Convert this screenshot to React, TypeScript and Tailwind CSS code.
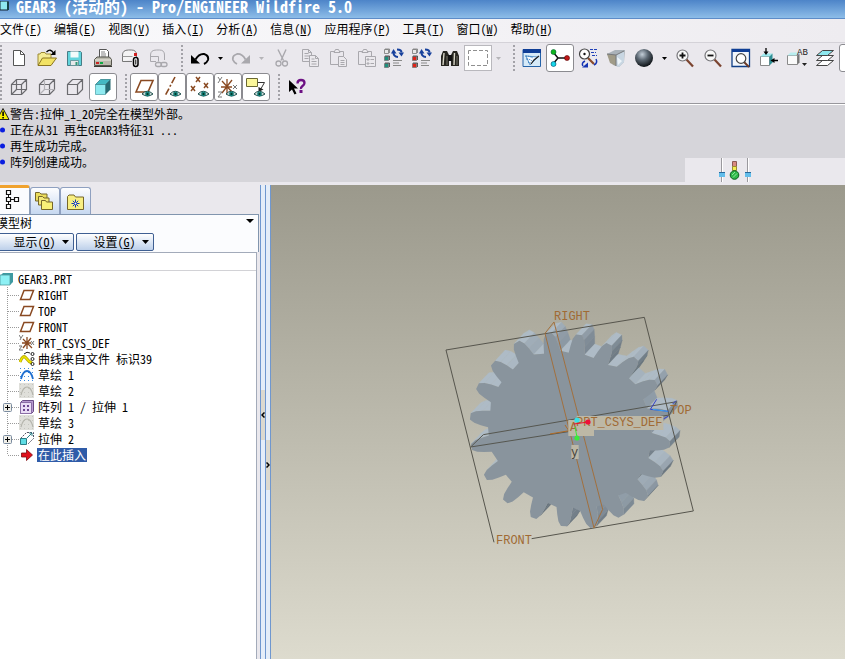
import type { ReactNode } from 'react';

const GREY = '#6b6b6f';
const PALE = '#a9a8ad';
const BROWN = '#8a4a22';

function Icon({ children, size = 20 }: { children: ReactNode; size?: number }) {
  return (
    <svg width={size} height={size} viewBox={`0 0 ${size} ${size}`} fill="none" className="shrink-0" aria-hidden="true">
      {children}
    </svg>
  );
}

function Tool({ label, pressed, disabled, children }: { label: string; pressed?: boolean; disabled?: boolean; children: ReactNode }) {
  return (
    <button
      type="button"
      aria-label={label}
      aria-pressed={pressed}
      disabled={disabled}
      className={
        pressed
          ? 'flex h-7 w-7 shrink-0 items-center justify-center rounded-[3px] border border-[#8b8b90] bg-white'
          : 'flex h-7 w-7 shrink-0 items-center justify-center'
      }
    >
      {children}
    </button>
  );
}

function Drop({ label, disabled }: { label: string; disabled?: boolean }) {
  return (
    <button type="button" aria-label={label} disabled={disabled} className="flex h-7 w-[13px] shrink-0 items-center justify-center">
      <svg width="5" height="3" viewBox="0 0 5 3" aria-hidden="true">
        <path d="M0 0h5L2.5 3z" fill={disabled ? '#b5b4b8' : '#000'} />
      </svg>
    </button>
  );
}

function Grip() {
  return (
    <div className="flex w-[13px] shrink-0 justify-center pl-1">
      <div className="h-[26px] border-l-2 border-dotted border-[#a3a2a8]" />
    </div>
  );
}

const wireCube = (hidden: string | null) => (
  <Icon>
    <path d="M2.5 7.5h10v10h-10zM2.5 7.5l5-5h10v10l-5 5M12.5 7.5l5-5" stroke={GREY} strokeWidth="1.2" />
    {hidden && <path d="M7.5 2.5v10h10M7.5 12.5l-5 5" stroke={hidden} strokeWidth="1.2" />}
  </Icon>
);

const eye = (
  <g>
    <path d="M9 18q5-5.500 11 0q-5.500 4-11 0" fill="#cfdad8" stroke="#1d4f4c" />
    <circle cx="14.500" cy="18" r="2.400" fill="#14807a" />
    <circle cx="14.500" cy="18" r="1" fill="#032" />
  </g>
);

const regen = (color: string) => (
  <Icon>
    {[1, 8, 15].map((y, i) => (
      <g key={y}>
        <path d={`M0.500 ${y + 0.5}h4v4h-4z`} fill={i === 0 ? '#e9e9e9' : color} stroke="#777" strokeWidth="0.800" />
        <path d={`M1 ${y}h4.500v4`} stroke={i === 0 ? '#777' : '#333'} strokeWidth="0.800" />
      </g>
    ))}
    <path d="M13 1.500q4.500 0 4.500 3" stroke="#17409c" strokeWidth="2" />
    <path d="M14.500 4.500h5.500l-2.500 4z" fill="#17409c" />
    <path d="M9.500 4.500q0 4 4.500 4.500" stroke="#17409c" strokeWidth="2" />
    <path d="M7 5.500L9.500 1l3 4.500z" fill="#17409c" />
    <path d="M9 12.500h9M9 15h6M9 17.500h8" stroke="#8a8a8a" />
  </Icon>
);

const magnifier = (sign: string) => (
  <Icon>
    <path d="M11 11l7 7.500" stroke="#7b4430" strokeWidth="2.200" />
    <circle cx="7.500" cy="7.500" r="5.500" fill="#f8f8f8" stroke="#77777b" strokeWidth="1.200" />
    <path d={sign} stroke="#111" strokeWidth="1.800" />
  </Icon>
);

const undoPath = 'M5.500 11.500Q9 5.500 14 6q5 1.500 4 6q-1 2.500-4 4';

function FileTools() {
  return (
    <>
      <Tool label="新建">
        <Icon>
          <path d="M4.500 2.500h7l4 4v11h-11z" fill="#fff" stroke="#555" />
          <path d="M11.500 2.500v4h4" stroke="#555" />
        </Icon>
      </Tool>
      <Tool label="打开">
        <Icon>
          <path d="M1 17V6h2l1-1.500h4L9 6h5v4" fill="#f5ec95" stroke="#9d8a35" />
          <path d="M1 17.500L5.500 10h14L14 17.500z" fill="#f2e263" stroke="#8a7420" />
          <path d="M9.500 4q4-4 7 1" stroke="#000" strokeWidth="1.300" />
          <path d="M18.500 2v5h-5z" fill="#000" />
        </Icon>
      </Tool>
      <Tool label="保存">
        <Icon>
          <path d="M2.500 3.500h13l1 1v13h-14z" fill="#62d4dc" stroke="#467c86" />
          <path d="M5.500 3.500h8v6h-8z" fill="#f2fbfb" />
          <path d="M5.500 12.500h8v5h-8z" fill="#e8e8ea" stroke="#5d8c92" strokeWidth="0.800" />
          <path d="M10.500 14h2v3h-2z" fill="#397" />
        </Icon>
      </Tool>
      <Tool label="打印">
        <Icon>
          <path d="M6.500 9.500v-8h7l2 2v6" fill="#fff" stroke="#555" />
          <path d="M8 4h4M8 6h5M8 8h5" stroke="#666" strokeWidth="0.800" />
          <path d="M1.500 11.500L4 9h12.500l2 2.500v6h-17z" fill="#b9b8ac" stroke="#55544c" />
          <path d="M2 12h16" stroke="#eeede4" />
          <path d="M3 14h3v2H3z" fill="#c22" />
          <path d="M7 14h3v2H7z" fill="#1a4" />
          <path d="M1 18.500h18" stroke="#3b3b36" />
        </Icon>
      </Tool>
      <Tool label="发送邮件">
        <Icon>
          <path d="M1.500 13.500V7q0-5 6-5h3q5 0 5 5v3M1.500 13.500H11" fill="#f4f4f4" stroke="#777" />
          <path d="M1.500 8.500h10" stroke="#999" />
          <path d="M13 5h3v3h-3z" fill="#d02020" />
          <rect x="12.500" y="9.500" width="4.500" height="9" rx="2.200" fill="#fff" stroke="#000" strokeWidth="1.500" />
          <path d="M14.800 11.500v5" stroke="#000" />
        </Icon>
      </Tool>
      <Tool label="发送链接" disabled>
        <Icon>
          <path d="M1.500 13.500V7q0-5 6-5h3q5 0 5 5v5M1.500 13.500H7M1.500 8.500h8v5" stroke={PALE} />
          <rect x="6.500" y="14.500" width="6" height="4" rx="2" stroke={PALE} strokeWidth="1.300" />
          <rect x="12" y="14.500" width="6" height="4" rx="2" stroke={PALE} strokeWidth="1.300" />
        </Icon>
      </Tool>
    </>
  );
}

function EditTools() {
  return (
    <>
      <Tool label="撤消">
        <Icon>
          <path d={undoPath} stroke="#000" strokeWidth="2" />
          <path d="M1 7v8.500h9z" fill="#000" />
        </Icon>
      </Tool>
      <Drop label="撤消列表" />
      <Tool label="重做" disabled>
        <Icon>
          <g transform="translate(20 0) scale(-1 1)">
            <path d={undoPath} stroke={PALE} strokeWidth="1.800" />
            <path d="M1 7v8.500h9z" fill={PALE} />
          </g>
        </Icon>
      </Tool>
      <Drop label="重做列表" disabled />
      <Tool label="剪切" disabled>
        <Icon>
          <path d="M6 1.500l5.500 11M14 1.500l-5 11" stroke={PALE} strokeWidth="1.400" />
          <circle cx="6.500" cy="15.500" r="2.500" stroke={PALE} strokeWidth="1.300" />
          <circle cx="13" cy="15.500" r="2.500" stroke={PALE} strokeWidth="1.300" />
        </Icon>
      </Tool>
      <Tool label="复制" disabled>
        <Icon>
          <path d="M2.500 1.500h6l3 3v9h-9zM8.500 1.500v3h3M4.500 5.500h4M4.500 8h5M4.500 10.500h4" stroke={PALE} />
          <path d="M9.500 7.500h6l3 3v8h-9z" fill="#ebe9ed" stroke={PALE} />
          <path d="M15.500 7.500v3h3M11.500 11h3M11.500 13.500h5M11.500 16h5" stroke={PALE} />
        </Icon>
      </Tool>
      <Tool label="粘贴" disabled>
        <Icon>
          <path d="M2.500 3.500h13v13h-13z" stroke={PALE} />
          <path d="M6 4.500L7.500 1.500h3L12 4.500z" fill="#ebe9ed" stroke={PALE} />
          <path d="M10.500 8.500h5l3 3v7h-8z" fill="#ebe9ed" stroke={PALE} />
          <path d="M12.500 12.500h4M12.500 14.500h4M12.500 16.500h4" stroke={PALE} />
        </Icon>
      </Tool>
      <Tool label="选择性粘贴" disabled>
        <Icon>
          <path d="M2.500 3.500h13v13h-13z" stroke={PALE} />
          <path d="M6 4.500L7.500 1.500h3L12 4.500z" fill="#ebe9ed" stroke={PALE} />
          <path d="M9.500 8.500h10v10h-10z" fill="#ebe9ed" stroke={PALE} />
          <path d="M11 11h2v1h-2zM11 15h2v1h-2zM14.500 11.500h3.500M14.500 15.500h3.500" stroke={PALE} />
        </Icon>
      </Tool>
      <Tool label="再生">{regen('#1f8f7d')}</Tool>
      <Tool label="再生管理器">{regen('#e02318')}</Tool>
      <Tool label="查找">
        <Icon>
          <path d="M3 3h4l2 4v11H1V8z" fill="#26251f" />
          <path d="M13 3h4l2 5v10h-8V7z" fill="#26251f" />
          <path d="M8 7h4v6H8z" fill="#111" />
          <path d="M4 5L3 17M14.500 5L14 17" stroke="#d9d7c9" strokeWidth="1.400" />
          <path d="M7 8v9M17 8v9" stroke="#77756a" />
        </Icon>
      </Tool>
      <button type="button" aria-label="选取框" className="flex h-[26px] w-7 shrink-0 items-center justify-center border border-[#b9b8bd] bg-white">
        <Icon>
          <path d="M0.500 4v-1.500h19v15h-19z" stroke="#8f8f8f" strokeDasharray="4 2" />
        </Icon>
      </button>
      <Drop label="选取框列表" disabled />
    </>
  );
}

function ViewTools() {
  return (
    <>
      <Tool label="重画">
        <Icon>
          <path d="M1 1.500h17.500v17H1z" fill="#d6eaf8" stroke="#2563a8" />
          <path d="M1 1h18v4H1z" fill="#0f3e96" />
          <path d="M4 8l4 9 8-8z" fill="#f6fbff" stroke="#3a7dbb" strokeWidth="0.800" />
          <path d="M3 8q5 0 8 2M4 11q4 0 6 2M6 14l3 1" stroke="#2b79c0" strokeDasharray="1.500 1" />
          <path d="M9 16l3-4 5-4" stroke="#222" strokeWidth="1.200" />
        </Icon>
      </Tool>
      <Tool label="旋转中心" pressed>
        <Icon>
          <path d="M3 4l5 6-5 6M8 10h9" stroke="#111" strokeWidth="1.500" />
          <circle cx="3.500" cy="4" r="2.500" fill="#10b41c" stroke="#063" strokeWidth="0.600" />
          <circle cx="3.500" cy="16" r="2.500" fill="#16d6e8" stroke="#046" strokeWidth="0.600" />
          <circle cx="17" cy="10" r="2.500" fill="#c01818" stroke="#500" strokeWidth="0.600" />
        </Icon>
      </Tool>
      <Tool label="定向模式">
        <Icon>
          <path d="M10 10l6 6" stroke="#8a4a2c" strokeWidth="2.200" />
          <circle cx="6.500" cy="6" r="5" fill="#fff" stroke="#444" strokeWidth="1.200" />
          <circle cx="6.500" cy="6" r="1.200" fill="#111" />
          <path d="M12 1.500h7M13 4.500h5M14 7.500h5" stroke="#2040b8" strokeDasharray="3 1" />
          <path d="M7 13q-4 2-2 5M18 11q2 4-2 6" stroke="#1534b4" strokeWidth="1.500" />
          <path d="M4 19.500h6v-5z" fill="#1534b4" />
        </Icon>
      </Tool>
      <Tool label="外观库">
        <Icon>
          <path d="M1 6l8-4h10l-1 12-5 5-6-2z" fill="#aab2b9" />
          <path d="M1 6l9 1v11l-6-3z" fill="#a09b88" />
          <path d="M10 7l8-4v11l-5 5-3-1z" fill="#c8d6e2" />
          <path d="M1 6l9 1 8-4M10 7v11" stroke="#77797c" />
          <path d="M11 9l5 4-4 4z" fill="#eef5fa" />
        </Icon>
      </Tool>
      <Tool label="着色球">
        <Icon>
          <defs>
            <radialGradient id="ball" cx="0.400" cy="0.300" r="0.700">
              <stop offset="0" stopColor="#c3ced8" />
              <stop offset="0.450" stopColor="#5d6974" />
              <stop offset="1" stopColor="#0e1216" />
            </radialGradient>
          </defs>
          <circle cx="10" cy="10" r="9" fill="url(#ball)" />
        </Icon>
      </Tool>
      <Drop label="外观列表" />
      <Tool label="放大">{magnifier('M4.500 7.500h6M7.500 4.500v6')}</Tool>
      <Tool label="缩小">{magnifier('M4.500 7.500h6')}</Tool>
      <Tool label="重新调整">
        <Icon>
          <path d="M1 1.500h17.500v17H1z" fill="#f2f6fb" stroke="#0f3e86" strokeWidth="1.300" />
          <path d="M1 1h18v3H1z" fill="#0f3e96" />
          <path d="M13 14l5 5" stroke="#6e3b28" strokeWidth="2" />
          <circle cx="10" cy="10.500" r="4.800" fill="#fff" stroke="#444" strokeWidth="1.200" />
        </Icon>
      </Tool>
      <Tool label="重定向">
        <Icon>
          <path d="M1.500 8.500h9v9h-9z" fill="#fff" stroke="#8a8a8a" />
          <path d="M1.500 8.500l3-3h9l-3 3z" fill="#9be9ee" />
          <path d="M10.500 8.500l3-3v9l-3 3z" fill="#2f8f95" />
          <path d="M7 0v5M19 12.500h-5" stroke="#000" strokeWidth="1.300" />
          <path d="M4.500 3.500h5L7 7zM15.500 10v5L11.500 12.500z" fill="#000" />
        </Icon>
      </Tool>
      <Tool label="已保存视图">
        <Icon size={22}>
          <path d="M1.500 8.500h10v9h-10z" fill="#fafafa" stroke="#8a8a8a" />
          <path d="M1.500 8.500l3-3h8l-2 3z" fill="#b9eef0" />
          <path d="M11.500 8.500l2-2v9l-2 2z" fill="#777" />
          <text x="11" y="8" fontSize="9" fill="#222" fontFamily="Liberation Mono, monospace">AB</text>
          <path d="M16 16h5l-2.500 3z" fill="#222" />
        </Icon>
      </Tool>
      <Tool label="层">
        <Icon>
          <path d="M1.500 17.500l6-5h11l-6 5z" fill="#fff" stroke="#444" />
          <path d="M1.500 12.500l6-5h11l-6 5z" fill="#fff" stroke="#444" />
          <path d="M1.500 7.500l6-5h11l-6 5z" fill="#8de8ee" stroke="#444" />
        </Icon>
      </Tool>
      <Tool label="视图管理器" pressed>
        <Icon>
          <path d="M5.500 3.500h11v13h-11z" stroke={GREY} />
        </Icon>
      </Tool>
    </>
  );
}

function DisplayTools() {
  return (
    <>
      <Tool label="线框">{wireCube('#6b6b6f')}</Tool>
      <Tool label="隐藏线">{wireCube('#b4b3b8')}</Tool>
      <Tool label="无隐藏线">{wireCube(null)}</Tool>
      <Tool label="着色" pressed>
        <Icon>
          <path d="M2.500 7.500h10v10h-10z" fill="#8feaf0" stroke="#6fb8bf" />
          <path d="M2.500 7.500l5-5h10l-5 5z" fill="#44b8c2" stroke="#4a979e" />
          <path d="M12.500 7.500l5-5v10l-5 5z" fill="#276a72" />
        </Icon>
      </Tool>
      <Grip />
      <Tool label="基准平面开关" pressed>
        <Icon size={22}>
          <path d="M3 16L8 4.500h12L15 16z" stroke={BROWN} strokeWidth="1.600" />
          {eye}
        </Icon>
      </Tool>
      <Tool label="基准轴开关" pressed>
        <Icon size={22}>
          <path d="M14 1L4 20" stroke={BROWN} strokeWidth="1.600" strokeDasharray="7 2 2 2" />
          {eye}
        </Icon>
      </Tool>
      <Tool label="基准点开关" pressed>
        <Icon size={22}>
          <path d="M7 1l4 5M11 1l-4 5M15 7l4 5M19 7l-4 5M2 10l4 5M6 10l-4 5" stroke={BROWN} strokeWidth="1.500" />
          {eye}
        </Icon>
      </Tool>
      <Tool label="坐标系开关" pressed>
        <Icon size={22}>
          <path d="M10 3v15M4 11h11M5 5l10 11M15 4L5 17" stroke={BROWN} strokeWidth="1.300" />
          <path d="M1 1l2 3 2-3M3 4l-2 3M16 9l4 4M20 9l-4 4M1 16h4l-4 5h4" stroke="#777" />
          {eye}
        </Icon>
      </Tool>
      <Tool label="注释开关" pressed>
        <Icon size={22}>
          <path d="M1.500 2.500h11v8h-11z" fill="#fbf79a" stroke="#6a6832" />
          <path d="M13 6.500h6.500l-4 7" stroke="#333" />
          <path d="M13.500 11v5l5-2.500z" fill="#222" />
          {eye}
        </Icon>
      </Tool>
      <Grip />
      <Tool label="上下文帮助">
        <Icon>
          <path d="M2 3v12l3-2.500 2.500 5 2-1-2.500-5h4z" fill="#000" />
          <path d="M10.500 6.500q0-3.500 3.500-3.500t3.500 3q0 1.500-2 3t-1.500 3" stroke="#6d1183" strokeWidth="2.300" />
          <path d="M12.500 13h3v3h-3z" fill="#6d1183" />
        </Icon>
      </Tool>
    </>
  );
}

const menus = [
  ['文件', 'F'], ['编辑', 'E'], ['视图', 'V'], ['插入', 'I'], ['分析', 'A'],
  ['信息', 'N'], ['应用程序', 'P'], ['工具', 'T'], ['窗口', 'W'], ['帮助', 'H'],
];

const messages = ['警告:拉伸_1_20完全在模型外部。', '正在从31 再生GEAR3特征31 ...', '再生成功完成。', '阵列创建成功。'];

const planeIcon = (
  <Icon size={16}>
    <path d="M1.500 12.500L5 3.500h9.500L11 12.500z" stroke={BROWN} strokeWidth="1.500" />
  </Icon>
);

const sketchIcon = (active: boolean) => (
  <Icon size={16}>
    {!active && <path d="M0 0h15v15H0z" fill="#dfdfda" />}
    <path d="M1 1.500h14M1 5.500h14M1 9.500h14M1 13.500h14" stroke={active ? '#3b8ae0' : '#c6c6c0'} strokeDasharray="1 3" />
    <path d="M2 12Q4 4 8 4t6 8" stroke={active ? '#1f6fd0' : '#b4b4ac'} strokeWidth={active ? 1.8 : 1.2} />
  </Icon>
);

const tree: { name: string; icon: ReactNode; expandable?: boolean; current?: boolean }[] = [
  { name: 'RIGHT', icon: planeIcon },
  { name: 'TOP', icon: planeIcon },
  { name: 'FRONT', icon: planeIcon },
  {
    name: 'PRT_CSYS_DEF',
    icon: (
      <Icon size={16}>
        <path d="M8 2v12M3 8h9M4 4l9 9M12 3L4 13" stroke={BROWN} strokeWidth="1.300" />
        <path d="M0 0l2 3 2-3M2 3l-1 2M12 6l3 4M15 6l-3 4M0 11h3l-3 4h4" stroke="#777" />
      </Icon>
    ),
  },
  {
    name: '曲线来自文件 标识39',
    icon: (
      <Icon size={16}>
        <path d="M1 11q3-8 6-4t6 5" stroke="#b7a800" strokeWidth="3" />
        <path d="M1 11q3-8 6-4t6 5" stroke="#f0e800" strokeWidth="1.500" />
        <path d="M5 3q3-3 6-1" stroke="#222" />
        <circle cx="13.500" cy="3" r="1.500" stroke="#222" />
        <circle cx="13.500" cy="8" r="1.500" stroke="#222" />
        <circle cx="13.500" cy="13" r="1.500" stroke="#222" />
      </Icon>
    ),
  },
  { name: '草绘 1', icon: sketchIcon(true) },
  { name: '草绘 2', icon: sketchIcon(false) },
  {
    name: '阵列 1 / 拉伸 1',
    expandable: true,
    icon: (
      <Icon size={16}>
        <path d="M1.500 3.500l2-2h11v11l-2 2h-11z" fill="#b79ad0" stroke="#6a4c86" />
        <path d="M1.500 3.500h11v11h-11z" fill="#e9dcf5" stroke="#8b6ea6" />
        <path d="M4 6h2v2H4zM8 6h2v2H8zM4 10h2v2H4zM8 10h2v2H8z" fill="#6b4590" />
      </Icon>
    ),
  },
  { name: '草绘 3', icon: sketchIcon(false) },
  {
    name: '拉伸 2',
    expandable: true,
    icon: (
      <Icon size={16}>
        <path d="M1.500 7.500l6-6h7v6l-6 6" stroke="#556" strokeDasharray="2 1" />
        <path d="M1.500 7.500h6v6h-6z" fill="#5fdce4" stroke="#2c7d86" />
        <path d="M8 7l5-5M10 2h3v3" stroke="#2c7d86" />
      </Icon>
    ),
  },
  {
    name: '在此插入',
    current: true,
    icon: (
      <Icon size={16}>
        <path d="M2.500 6h5V2.500L13.500 8l-6 5.500V10h-5z" fill="#e0101c" stroke="#7d0a10" strokeWidth="0.800" />
      </Icon>
    ),
  },
];

function ModelTree() {
  return (
    <div className="pb-4">
      <div className="flex h-4 items-center gap-1">
        <Icon size={14}>
          <path d="M0 4l3-3h10v9l-3 3H0z" fill="#3d9aa2" />
          <path d="M0 3h10v10H0z" fill="#8df0f4" stroke="#4f9aa0" strokeWidth="0.800" />
        </Icon>
        <span>GEAR3.PRT</span>
      </div>
      <ul>
        {tree.map((node) => (
          <li key={node.name} className="flex h-4 items-center">
            <svg width="19" height="16" viewBox="0 0 19 16" fill="none" className="shrink-0" aria-hidden="true">
              <path d={node.current ? 'M7.500 0v8' : 'M7.500 0v16'} stroke="#9a9a9a" strokeDasharray="1 1" />
              <path d="M8 8.500h11" stroke="#9a9a9a" strokeDasharray="1 1" />
              {node.expandable && (
                <g>
                  <rect x="3.500" y="4.500" width="8" height="8" rx="1" fill="#f0efe9" stroke="#7a8ba0" />
                  <path d="M5 8.500h5M7.500 6v5" stroke="#000" />
                </g>
              )}
            </svg>
            {node.icon}
            <span className={node.current ? 'ml-0.5 bg-[#2f5ba8] px-px leading-[14px] text-white' : 'ml-0.5 px-px leading-[14px]'}>{node.name}</span>
          </li>
        ))}
      </ul>
    </div>
  );
}

function SidePanel() {
  return (
    <aside className="flex w-[259px] shrink-0 flex-col bg-[#eae8ed]">
      <div role="tablist" className="flex h-[29px] items-end">
        <button type="button" role="tab" aria-selected="true" aria-label="模型树" className="flex h-[29px] w-[30px] items-center justify-center rounded-tr-[3px] border-t-[3px] border-r border-t-[#f0a22e] border-r-[#8fa0b8] bg-[#fbfcfe] pr-1 pb-1">
          <Icon>
            <path d="M3.500 1.500h4v4h-4zM3.500 8.500h4v4h-4zM3.500 15.500h4v4h-4zM11.500 8.500h4v4h-4z" fill="#fff" stroke="#111" strokeWidth="1.200" />
            <path d="M5.500 6v2M5.500 13v2M8 10.500h3" stroke="#111" />
          </Icon>
        </button>
        <button type="button" role="tab" aria-selected="false" aria-label="文件夹浏览器" className="flex h-[27px] w-[30px] items-center justify-center rounded-t-[3px] border border-b-0 border-[#8fa0c0] bg-gradient-to-b from-[#fdfdff] to-[#c6d8f0]">
          <Icon>
            <path d="M0.500 3V1.500h4L6 3h6v7H0.500z" fill="#eadc5c" stroke="#77672a" />
            <path d="M3.500 7V5.500h4L9 7h5v7H3.500z" fill="#f3e87a" stroke="#77672a" />
            <path d="M6.500 11V9.500h4l1 1.500h6v7.500h-11z" fill="#f8ef78" stroke="#77672a" />
          </Icon>
        </button>
        <button type="button" role="tab" aria-selected="false" aria-label="收藏夹" className="flex h-[27px] w-[31px] items-center justify-center rounded-t-[3px] border border-b-0 border-[#8fa0c0] bg-gradient-to-b from-[#fdfdff] to-[#c6d8f0]">
          <Icon>
            <path d="M1.500 18.500v-13l1.500-1.500h5l1.500 2h8v12.500z" fill="#f8ef82" stroke="#77672a" />
            <path d="M9.500 8.500v8M5.500 12.500h8M6.800 9.800l5.400 5.400M12.200 9.800l-5.400 5.400" stroke="#1238b0" />
            <circle cx="9.500" cy="12.500" r="1" fill="#fff" />
          </Icon>
        </button>
      </div>
      <div className="overflow-hidden border-t border-r border-[#8195ae] bg-[#fbfcfe]">
        <div className="-ml-1 flex items-center justify-between pr-0.5">
          <h2 className="leading-4">模型树</h2>
          <button type="button" aria-label="面板菜单" className="flex h-4 w-3 justify-center pt-1">
            <svg width="8" height="4" viewBox="0 0 8 4" aria-hidden="true">
              <path d="M0 0h8L4 4z" />
            </svg>
          </button>
        </div>
        <div className="-ml-1 flex gap-0.5 pt-0.5 pb-px">
          {[['显示', 'O'], ['设置', 'G']].map(([name, key]) => (
            <button key={key} type="button" className="flex h-[18px] w-[78px] items-center justify-center gap-1.5 rounded-[2px] border border-[#3f5f92] bg-gradient-to-b from-white to-[#bdd0ea] pl-3 leading-4">
              <span>
                {name}(<u>{key}</u>)
              </span>
              <svg width="7" height="4" viewBox="0 0 7 4" aria-hidden="true">
                <path d="M0 0h7L3.500 4z" />
              </svg>
            </button>
          ))}
        </div>
      </div>
      <div className="mr-0.5 flex-1 border-t border-r border-[#a3abba] bg-white">
        <div className="h-[18px] border-b border-[#d2d2d6]" />
        <ModelTree />
      </div>
    </aside>
  );
}

// Front-face outline: angle (deg, clockwise from +x) and tip radius of every tooth
const teeth = [
  [-101, 297], [-83, 290], [-64, 288], [-46, 299], [-28, 304], [-9, 306], [8, 312], [25, 315], [41, 315], [58, 307],
  [75, 304], [92, 291], [111, 285], [131, 286], [150, 286], [170, 294], [188, 296], [206, 302], [222, 302], [240, 306],
];
const depth = [30, -32];

const outline = teeth.flatMap(([angle, tip]) =>
  [[-6, -58], [-4.8, -36], [-3.6, -16], [-1.8, -2], [1.8, -2], [3.6, -16], [4.8, -36], [6, -58]].map(([da, dr]) => {
    const a = ((angle + da) * Math.PI) / 180;
    return [412 + Math.cos(a) * (tip + dr), 390 + Math.sin(a) * (tip + dr)];
  }),
);

const flanks = outline.flatMap(([x1, y1], i) => {
  const [x2, y2] = outline[(i + 1) % outline.length];
  const len = Math.hypot(x2 - x1, y2 - y1);
  const nx = (y2 - y1) / len;
  const ny = (x1 - x2) / len;
  if (nx * depth[0] + ny * depth[1] <= 0) return [];
  const light = Math.min(1, Math.max(0, 0.6 - nx * 0.25 - ny * 0.6));
  const fill = `rgb(${Math.round(98 + light * 76)} ${Math.round(110 + light * 77)} ${Math.round(120 + light * 78)})`;
  const d = `M${x1} ${y1}L${x2} ${y2}L${x2 + depth[0]} ${y2 + depth[1]}L${x1 + depth[0]} ${y1 + depth[1]}z`;
  return [{ d, fill }];
});

const face = `M${outline.map((p) => p.join(' ')).join('L')}z`;

function GearView() {
  return (
    <main className="relative min-w-0 flex-1 overflow-hidden bg-gradient-to-b from-[#9b998c] to-[#dddbce]">
      <svg width="290" height="260" viewBox="0 0 290 260" fill="none" className="absolute top-[115px] left-[159px]" role="img" aria-label="GEAR3">
        <g transform="scale(0.333333)">
          {flanks.map((f) => (
            <path key={f.d} d={f.d} fill={f.fill} stroke={f.fill} />
          ))}
          <path d={face} fill="#89949d" />
          <path d="M192 727L48 150L643 52L790 633L305 716" stroke="#55544c" strokeWidth="3" />
          <path d="M415 395L122 441L160 404L740 305L718 345L490 382" stroke="#55564f" strokeWidth="3" />
          <path d="M372 66L345 100L492 684L518 628z" stroke="#a26f3d" strokeWidth="3" />
          <path d="M360 402L418 392M405 375l20 30" stroke="#b06a24" strokeWidth="3" />
          <path d="M680 298L661 328L715 334M700 357l14-8M728 312l10-10" stroke="#3440c8" strokeWidth="3" />
          <path d="M668 328L713 334" stroke="#3aa4ee" strokeWidth="3" />
          <path d="M440 348H700V390H492V408H415V360H440z" fill="#bdb8a6" />
          <path d="M424 435h22v42h-22z" fill="#bdb8a6" />
        </g>
        <g fontSize="12" fill="#a06a34" fontFamily="Liberation Mono, monospace">
          <text x="124" y="20">RIGHT</text>
          <text x="240" y="114">TOP</text>
          <text x="66" y="244">FRONT</text>
          <text x="146" y="126">PRT_CSYS_DEF</text>
          <text x="140" y="131">A</text>
          <text x="141" y="156" fill="#44423a">y</text>
        </g>
        <path d="M144 124l14-2" stroke="#e8102c" />
        <path d="M145 127l2 10" stroke="#38e838" />
        <circle cx="158" cy="122" r="2.600" fill="#ee1038" />
        <circle cx="147" cy="138" r="2.600" fill="#3ce83c" />
        <circle cx="147" cy="120" r="2.600" fill="#38e0e8" />
      </svg>
    </main>
  );
}

function Splitter() {
  return (
    <div className="flex w-3 shrink-0 bg-[#eae8ed] pl-px">
      <div className="flex w-[6px] flex-col border-x border-[#6f97cf] bg-[#e4edf9] pt-[205px]">
        <button type="button" aria-label="折叠" className="flex h-[50px] items-center justify-center bg-[#dcd9cf]">
          <svg width="4" height="6" viewBox="0 0 4 6" fill="none" aria-hidden="true"><path d="M3.500 0.500L1 3l2.500 2.500" stroke="#000" strokeWidth="1.500" /></svg>
        </button>
      </div>
      <div className="flex w-[5px] flex-col border-r border-[#6f97cf] bg-[#e4edf9] pt-[255px]">
        <button type="button" aria-label="展开" className="flex h-[50px] items-center justify-center bg-[#dcd9cf]">
          <svg width="4" height="6" viewBox="0 0 4 6" fill="none" aria-hidden="true"><path d="M0.500 0.500L3 3L0.500 5.500" stroke="#000" strokeWidth="1.500" /></svg>
        </button>
      </div>
    </div>
  );
}

export default function App() {
  return (
    <div className="flex min-h-screen w-full flex-col overflow-hidden bg-[#eae8ed] font-['Noto_Sans_Mono_CJK_SC','Noto_Sans_CJK_SC',monospace] text-[12px] leading-4 text-black">
      <header className="flex h-[19px] items-center gap-1.5 border-b border-[#5d8cc8] bg-gradient-to-b from-[#4d84c8] to-[#8dbde8] pb-1.5">
        <Icon size={10}>
          <path d="M0 0h8v9H0z" fill="#8feaf0" stroke="#123" />
          <path d="M8 1v8" stroke="#17444a" strokeWidth="2" />
        </Icon>
        <h1 className="text-[16px] leading-3 font-bold whitespace-nowrap text-white">GEAR3 (活动的) - Pro/ENGINEER Wildfire 5.0</h1>
      </header>

      <nav className="flex h-6 items-center gap-3 border-b border-[#d4d2d8] bg-gradient-to-r from-[#fafafc] to-[#eeecf0] pb-1">
        {menus.map(([name, key]) => (
          <button key={key} type="button" className="whitespace-nowrap">
            {name}(<u>{key}</u>)
          </button>
        ))}
      </nav>

      <div className="overflow-hidden border-b border-[#98979c] pb-0.5">
        <div className="flex h-[30px] items-center">
          <div className="mr-[3px] h-[26px] shrink-0 border-l-2 border-dotted border-[#a3a2a8]" />
          <FileTools />
          <Grip />
          <EditTools />
          <Grip />
          <ViewTools />
        </div>
        <div className="flex h-7 items-center">
          <div className="mr-[3px] h-[26px] shrink-0 border-l-2 border-dotted border-[#a3a2a8]" />
          <DisplayTools />
        </div>
      </div>

      <section className="flex items-end border-t border-white bg-[#d6d5da]">
        <ul className="flex-1 border-b-[3px] border-[#eae8ed] pt-px pb-3">
          {messages.map((m, i) => (
            <li key={m} className="flex h-4 items-center">
              <svg width="10" height="14" viewBox="0 0 10 14" className="shrink-0" aria-hidden="true">
                {i === 0 ? (
                  <g>
                    <path d="M-3 12.500L3 1.500L9 12.500z" fill="#f8f000" stroke="#222" />
                    <path d="M2.300 4.500h1.600v4.500H2.300zM2.300 10h1.600v1.500H2.300z" />
                  </g>
                ) : (
                  <circle cx="2.500" cy="7" r="2.500" fill="#0a1ee0" />
                )}
              </svg>
              <span>{m}</span>
            </li>
          ))}
        </ul>
        <div className="flex h-[27px] w-40 justify-start bg-[#eae8ed] pl-[33px]">
          <svg width="34" height="25" viewBox="0 0 34 25" fill="none" aria-hidden="true">
            <path d="M3.500 0v24M29.500 0v24" stroke="#9a999e" />
            <path d="M4.500 0v24M30.500 0v24" stroke="#fff" />
            <path d="M1 14h6v5H1zM27 14h6v5h-6z" fill="#62bdea" />
            <path d="M1 14.500h6M27 14.500h6" stroke="#27699c" />
            <path d="M14.500 3.500h4v5h-4z" fill="#d98a80" stroke="#8d5a54" />
            <path d="M14.500 8.500h4v4h-4z" fill="#f4ee50" stroke="#9a8f30" />
            <circle cx="16.500" cy="17" r="4.300" fill="#2fb84a" stroke="#0b5c1c" />
            <path d="M14 17l3-3M15 19.500l4-4" stroke="#8fe89a" />
          </svg>
        </div>
      </section>

      <div className="flex flex-1 items-stretch">
        <SidePanel />
        <Splitter />
        <GearView />
      </div>
    </div>
  );
}
